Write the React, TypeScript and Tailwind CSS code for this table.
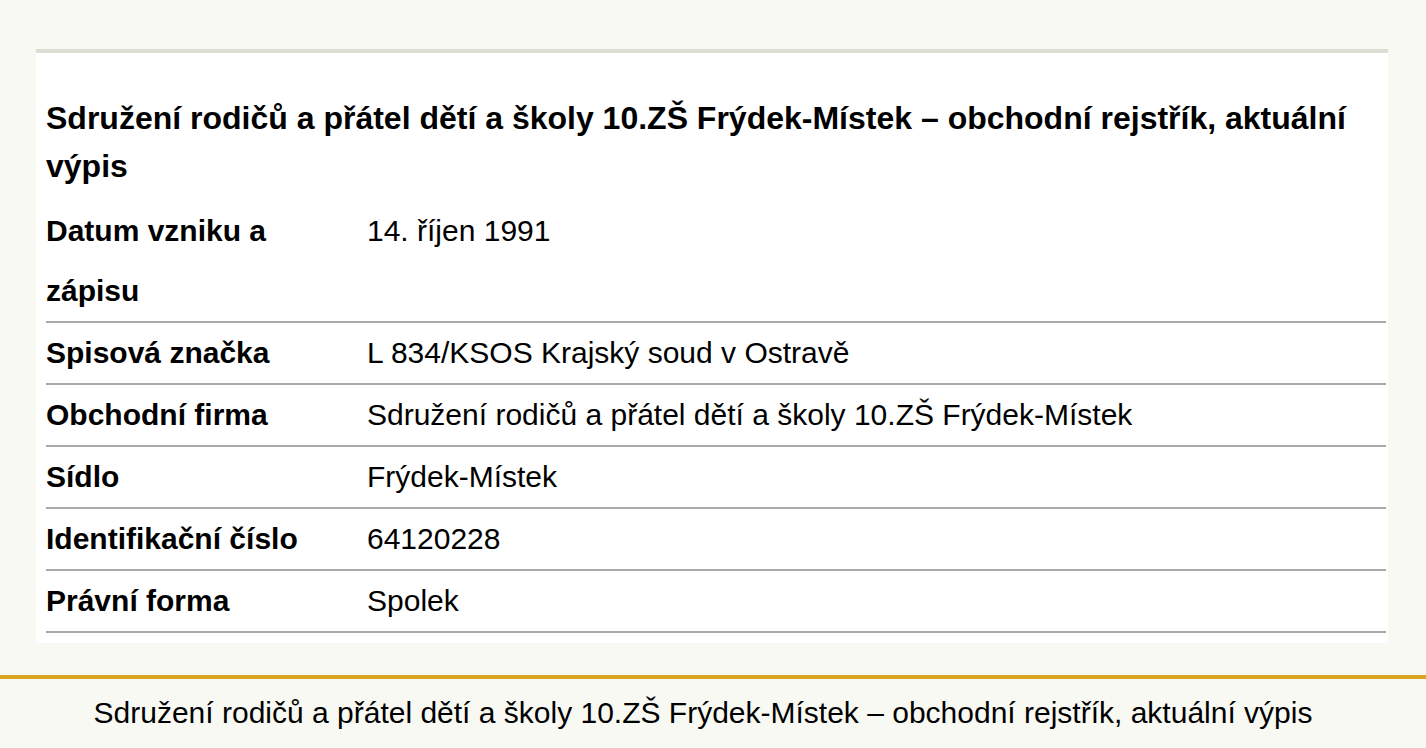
const rows: { label: string; value: string }[] = [
  { label: 'Datum vzniku a zápisu', value: '14. říjen 1991' },
  { label: 'Spisová značka', value: 'L 834/KSOS Krajský soud v Ostravě' },
  { label: 'Obchodní firma', value: 'Sdružení rodičů a přátel dětí a školy 10.ZŠ Frýdek-Místek' },
  { label: 'Sídlo', value: 'Frýdek-Místek' },
  { label: 'Identifikační číslo', value: '64120228' },
  { label: 'Právní forma', value: 'Spolek' },
];

const title = 'Sdružení rodičů a přátel dětí a školy 10.ZŠ Frýdek-Místek – obchodní rejstřík, aktuální výpis';

export default function App() {
  return (
    <div className="min-h-screen bg-[#f9f9f4] text-black font-['Liberation_Sans',Arial,sans-serif]">
      <main className="pt-[49px] pl-[36px] pr-[38px]">
        <section className="bg-white border-t-4 border-[#dcdcd2] pl-[10px] pr-[2px] pb-[10px]">
          <h1 className="pt-[41px] mb-[11px] text-[32px] leading-[48px] font-bold">{title}</h1>
          <div>
            {rows.map((row) => (
              <div
                key={row.label}
                className="grid grid-cols-[321px_1fr] border-b-2 border-[#aaaaaa] text-[30px] leading-[60px]"
              >
                <div className="font-bold pr-4">{row.label}</div>
                <div>{row.value}</div>
              </div>
            ))}
          </div>
        </section>
      </main>
      <footer className="mt-[32px] border-t-4 border-[#daa520] text-center text-[30px] leading-[68px] pr-[20px] whitespace-nowrap">
        {title}
      </footer>
    </div>
  );
}
